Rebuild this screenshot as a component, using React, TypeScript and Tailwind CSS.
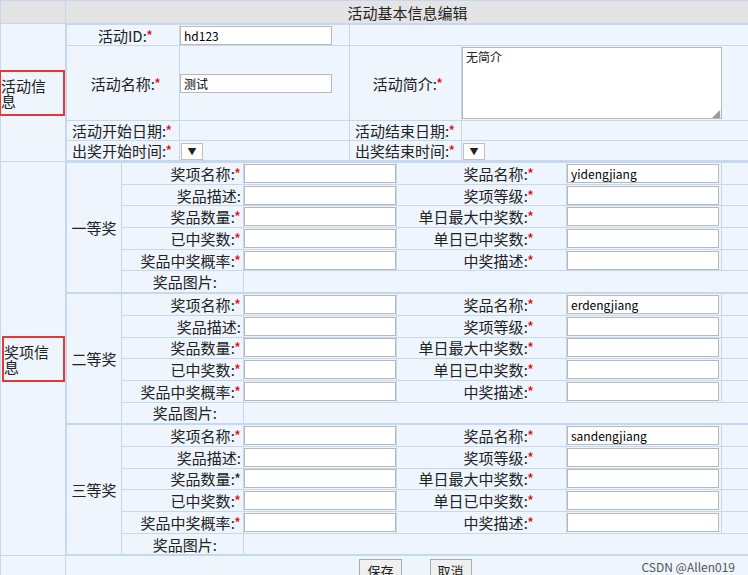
const td = 'border border-[#c6d8ee] p-0';
const star = <span className="text-red-600">*</span>;

function Inp({ v = '', w = 'w-[152px]' }: { v?: string; w?: string }) {
  return (
    <input
      readOnly
      value={v}
      className={`${w} h-[19px] block bg-white border border-[#b8b8b8] px-[3px] text-[12px] text-black outline-none`}
    />
  );
}

function Sel() {
  return (
    <span className="inline-flex items-center justify-center w-[22px] h-[17px] bg-white border border-[#c0c0c0] text-[9px] ml-[1px] align-middle">▼</span>
  );
}

type Row = [string, boolean, string, boolean, string];

function Prize({ name, rows }: { name: string; rows: Row[] }) {
  return (
    <table className="border-collapse w-full table-fixed">
      <colgroup>
        <col className="w-[55px]" />
        <col className="w-[122px]" />
        <col className="w-[153px]" />
        <col className="w-[170px]" />
        <col className="w-[155px]" />
        <col />
      </colgroup>
      <tbody>
        {rows.map((r, i) => (
          <tr key={i} className="h-[21.7px]">
            {i === 0 && (
              <td rowSpan={6} className={`${td} text-center`}>{name}</td>
            )}
            <td className={`${td} text-right pr-[2px]`}>{r[0]}:{r[1] ? star : r[0] === '奖品数量' ? '*' : null}</td>
            <td className={`${td}`}><Inp /></td>
            <td className={`${td} text-right pr-[32px]`}>{r[2]}:{r[3] ? star : null}</td>
            <td className={`${td}`}><Inp v={r[4]} /></td>
            <td className={td}></td>
          </tr>
        ))}
        <tr className="h-[21.7px]">
          <td className={`${td} text-right pr-[26px]`}>奖品图片:</td>
          <td colSpan={4} className={td}></td>
        </tr>
      </tbody>
    </table>
  );
}

export default function App() {
  const mk = (n: string, qStar: boolean): Row[] => [
    ['奖项名称', true, '奖品名称', true, n],
    ['奖品描述', false, '奖项等级', true, ''],
    ['奖品数量', qStar, '单日最大中奖数', true, ''],
    ['已中奖数', true, '单日已中奖数', true, ''],
    ['奖品中奖概率', true, '中奖描述', true, ''],
  ];
  return (
    <div className="w-[748px] h-[575px] overflow-hidden bg-[#eef5fd] text-[15px] text-[#222] leading-none" style={{ fontFamily: '"Noto Sans CJK SC", "Liberation Sans", sans-serif' }}>
      <table className="border-collapse w-[750px] table-fixed">
        <colgroup>
          <col className="w-[65px]" />
          <col />
        </colgroup>
        <tbody>
          <tr className="h-[23px] bg-[#e4e4e4]">
            <td className={td}></td>
            <td className={`${td} text-center`}>活动基本信息编辑</td>
          </tr>
          <tr>
            <td className={`${td}`}>
              <span className="inline-block border-2 border-[#e53935] py-[6px] pr-[4px] -ml-[2px]">活动信息</span>
            </td>
            <td className={td}>
              <table className="border-collapse w-full table-fixed">
                <colgroup>
                  <col className="w-[113px]" />
                  <col className="w-[170px]" />
                  <col className="w-[112px]" />
                  <col />
                </colgroup>
                <tbody>
                  <tr className="h-[21px]">
                    <td className={`${td} text-right pr-[26px]`}>活动ID:{star}</td>
                    <td className={td}><Inp v="hd123" /></td>
                    <td colSpan={2} className={td}></td>
                  </tr>
                  <tr className="h-[75px]">
                    <td className={`${td} text-right pr-[18px]`}>活动名称:{star}</td>
                    <td className={td}><Inp v="测试" /></td>
                    <td className={`${td} text-right pr-[18px]`}>活动简介:{star}</td>
                    <td className={td}>
                      <div className="w-[260px] h-[72px] bg-white border border-[#b8b8b8] px-[3px] pt-[3px] text-[12px] relative">
                        无简介
                        <span className="absolute right-[1px] bottom-0 text-[8px] text-[#999]">◢</span>
                      </div>
                    </td>
                  </tr>
                  <tr className="h-[20px]">
                    <td className={`${td} pl-[5px]`}>活动开始日期:{star}</td>
                    <td className={td}></td>
                    <td className={`${td} pl-[5px]`}>活动结束日期:{star}</td>
                    <td className={td}></td>
                  </tr>
                  <tr className="h-[20px]">
                    <td className={`${td} pl-[5px]`}>出奖开始时间:{star}</td>
                    <td className={td}><Sel /></td>
                    <td className={`${td} pl-[5px]`}>出奖结束时间:{star}</td>
                    <td className={td}><Sel /></td>
                  </tr>
                </tbody>
              </table>
            </td>
          </tr>
          <tr>
            <td className={`${td}`}>
              <span className="inline-block border-2 border-[#e53935] py-[6px] pr-[2px] ml-[1px]">奖项信息</span>
            </td>
            <td className={td}>
              <Prize name="一等奖" rows={mk('yidengjiang', true)} />
              <Prize name="二等奖" rows={mk('erdengjiang', true)} />
              <Prize name="三等奖" rows={mk('sandengjiang', false)} />
            </td>
          </tr>
          <tr className="h-[24px]">
            <td className={td}></td>
            <td className={`${td} relative`}>
              <div className="flex justify-center gap-[28px] pl-[16px] pt-[3px]">
                <button className="h-[22px] px-[7px] bg-[#f0f0f0] border border-[#aaa] text-[13px]">保存</button>
                <button className="h-[22px] px-[7px] bg-[#f0f0f0] border border-[#aaa] text-[13px]">取消</button>
              </div>
              <span className="absolute right-[14px] top-[5px] text-[12px] text-[#555]">CSDN @Allen019</span>
            </td>
          </tr>
        </tbody>
      </table>
    </div>
  );
}
